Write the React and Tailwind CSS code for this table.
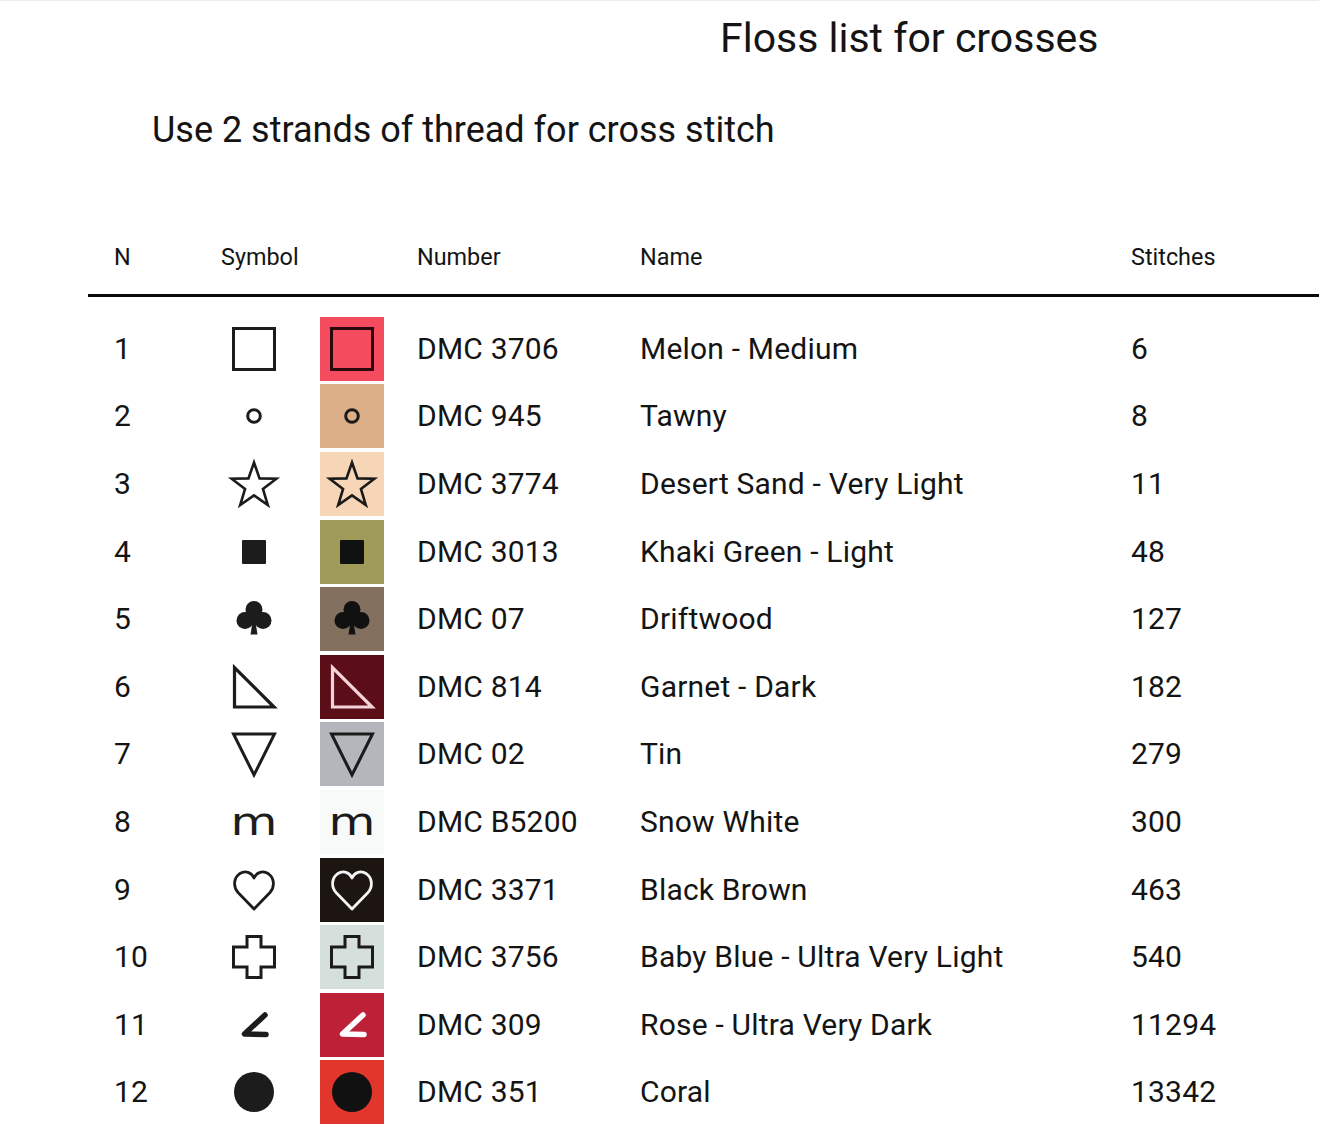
import React from "react";

const starPts = Array.from({ length: 10 }, (_, i) => {
  const a = -Math.PI / 2 + (i * Math.PI) / 5;
  const r = i % 2 ? 9.4 : 23.5;
  return `${(22 + r * Math.cos(a)).toFixed(2)},${(24 + r * Math.sin(a)).toFixed(2)}`;
}).join(" ");

function Sym({ kind, c }) {
  if (kind === "m") {
    return (
      <span
        className="block font-['DejaVu_Sans',sans-serif] text-[37px] leading-none scale-x-[1.3] translate-y-[1px]"
        style={{ color: c }}
      >
        m
      </span>
    );
  }
  return (
    <svg width="44" height="44" viewBox="0 0 44 44" className="overflow-visible">
      {kind === "square" && (
        <rect x="1.5" y="1.5" width="41" height="41" fill="none" stroke={c} strokeWidth="3" />
      )}
      {kind === "ring" && <circle cx="22" cy="22" r="6.3" fill="none" stroke={c} strokeWidth="3" />}
      {kind === "star" && (
        <polygon points={starPts} fill="none" stroke={c} strokeWidth="2.6" strokeLinejoin="miter" />
      )}
      {kind === "fsquare" && <rect x="10" y="10" width="24" height="24" rx="1" fill={c} />}
      {kind === "club" && (
        <g fill={c}>
          <circle cx="22" cy="12.5" r="8.5" />
          <circle cx="13" cy="23.5" r="8.5" />
          <circle cx="31" cy="23.5" r="8.5" />
          <rect x="17" y="14" width="10" height="12" />
          <polygon points="20.6,24 23.4,24 25.5,37.5 18.5,37.5" />
        </g>
      )}
      {kind === "rtri" && (
        <polygon points="2.5,2.5 2.5,42 42,42" fill="none" stroke={c} strokeWidth="3.2" />
      )}
      {kind === "dtri" && (
        <polygon points="1.5,2 42.5,2 22,43" fill="none" stroke={c} strokeWidth="3" strokeLinejoin="miter" />
      )}
      {kind === "heart" && (
        <path
          d="M22 41 L6 24.5 C1 19 1.5 10 7.5 5.8 C13.5 2 19.5 4.5 22 10 C24.5 4.5 30.5 2 36.5 5.8 C42.5 10 43 19 38 24.5 Z"
          fill="none"
          stroke={c}
          strokeWidth="2.8"
          strokeLinejoin="round"
        />
      )}
      {kind === "cross" && (
        <polygon
          points="15,1.5 29,1.5 29,12 42.5,12 42.5,32 29,32 29,42.5 15,42.5 15,32 1.5,32 1.5,12 15,12"
          fill="none"
          stroke={c}
          strokeWidth="3"
        />
      )}
      {kind === "angle" && (
        <path d="M33 12 L12.5 31 L34 31.5" fill="none" stroke={c} strokeWidth="5.5" strokeLinejoin="round" strokeLinecap="round" />
      )}
      {kind === "dot" && <circle cx="22" cy="22" r="20" fill={c} />}
    </svg>
  );
}

const rows = [
  [1, "square", "#f44b5f", "#2b080d", "DMC 3706", "Melon - Medium", "6"],
  [2, "ring", "#dcae88", "#1a1a1a", "DMC 945", "Tawny", "8"],
  [3, "star", "#f7d6b8", "#1a1a1a", "DMC 3774", "Desert Sand - Very Light", "11"],
  [4, "fsquare", "#a09a5b", "#111111", "DMC 3013", "Khaki Green - Light", "48"],
  [5, "club", "#84705f", "#111111", "DMC 07", "Driftwood", "127"],
  [6, "rtri", "#5b0e18", "#f6d3d9", "DMC 814", "Garnet - Dark", "182"],
  [7, "dtri", "#b3b6ba", "#1a1a1a", "DMC 02", "Tin", "279"],
  [8, "m", "#f8faf9", "#1a1a1a", "DMC B5200", "Snow White", "300"],
  [9, "heart", "#1d1511", "#f4f4f4", "DMC 3371", "Black Brown", "463"],
  [10, "cross", "#d5dfdc", "#1a1a1a", "DMC 3756", "Baby Blue - Ultra Very Light", "540"],
  [11, "angle", "#bd2138", "#ffffff", "DMC 309", "Rose - Ultra Very Dark", "11294"],
  [12, "dot", "#e2352c", "#111111", "DMC 351", "Coral", "13342"],
];

export default function App() {
  return (
    <div className="w-[1319px] h-[1143px] bg-white border-t border-[#ececec] font-['Roboto',sans-serif] text-[#141414] overflow-hidden">
      <div className="pl-[720px] pt-[17px] text-[41px] leading-none">Floss list for crosses</div>
      <div className="pl-[152px] mt-[53px] text-[36px] leading-none">Use 2 strands of thread for cross stitch</div>

      <div className="ml-[88px] mt-[88px]">
        <div className="h-[44px] flex items-center text-[23.4px] leading-none">
          <div className="w-[133px] pl-[26px]">N</div>
          <div className="w-[196px]">Symbol</div>
          <div className="w-[223px]">Number</div>
          <div className="w-[491px]">Name</div>
          <div>Stitches</div>
        </div>
        <div className="h-[3px] mt-[14px] bg-[#0a0a0a]" />
        <div className="mt-[18px] flex flex-col">
          {rows.map(([n, kind, bg, sc, num, name, st]) => (
            <div key={n} className="h-[67.6px] flex items-center text-[30px] leading-none tracking-[0.2px]">
              <div className="w-[144px] pl-[26px]">{n}</div>
              <div className="w-[44px] h-[44px] flex items-center justify-center">
                <Sym kind={kind} c="#1c1c1c" />
              </div>
              <div
                className="ml-[44px] w-[64px] h-[64px] flex items-center justify-center"
                style={{ backgroundColor: bg }}
              >
                <Sym kind={kind} c={sc} />
              </div>
              <div className="ml-[33px] w-[223px]">{num}</div>
              <div className="w-[491px]">{name}</div>
              <div>{st}</div>
            </div>
          ))}
        </div>
      </div>
    </div>
  );
}
